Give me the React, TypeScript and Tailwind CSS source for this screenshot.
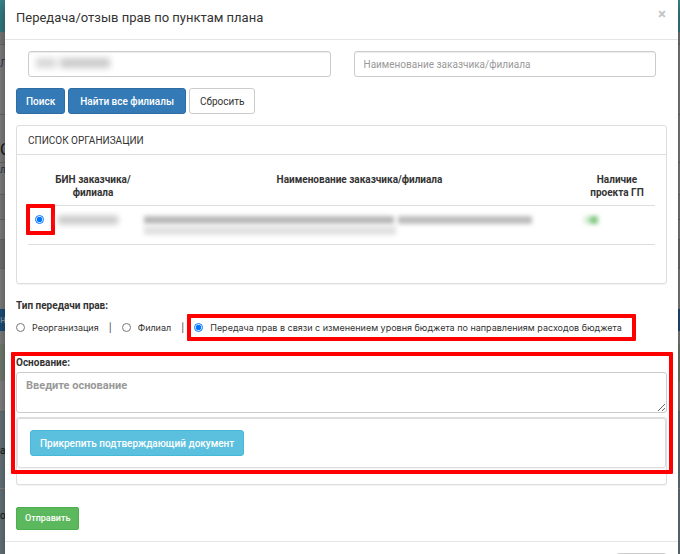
import { FC, ReactNode } from "react";

// Slices of the dimmed page that stay visible on both sides of the dialog
const pageBands = [
  { key: "navbar", className: "h-8 bg-[#37848b]", text: "" },
  { key: "crumbs", className: "h-[13px] border-b border-[#707070] bg-[#808080]", text: "" },
  { key: "toolbar", className: "h-[70px] border-b border-[#707070] bg-[#888888] pt-3 text-[#2b3a5c]", text: "Л" },
  { key: "heading", className: "h-[48px] border-b border-[#707070] bg-[#888888] pt-7 text-[16px] text-[#161616]", text: "О" },
  { key: "rowA", className: "h-[32px] border-b border-[#707070] bg-[#888888] text-[#2b3a5c]", text: "л" },
  { key: "rowB", className: "h-[25px] border-b border-[#707070] bg-[#838383]", text: "" },
  { key: "rowC", className: "h-[20px] border-b border-[#707070] bg-[#888888]", text: "" },
  { key: "rowD", className: "h-[29px] border-b border-[#707070] bg-[#787878]", text: "" },
  { key: "rowE", className: "h-10 bg-[#888888]", text: "" },
  { key: "button", className: "h-[22px] bg-[#1f5483] pt-1 text-[#9aa5b0]", text: "н" },
  { key: "gap", className: "h-[13px] bg-[#888888]", text: "" },
  { key: "success", className: "h-[37px] bg-[#7b8477]", text: "" },
  { key: "field", className: "h-[31px] border-b border-[#707070] bg-[#8b8b8b]", text: "" },
  { key: "info", className: "h-[77px] border-b border-[#928f88] bg-[#6c7c84] pt-8 text-[#161616]", text: "а" },
  { key: "footer", className: "grow bg-[#6c7c84] pt-5 text-[#161616]", text: "о" },
];

interface HighlightProps {
  className: string;
}

const Highlight: FC<HighlightProps> = ({ className }) => (
  <span
    aria-hidden="true"
    className={`pointer-events-none absolute rounded-[1px] border-4 border-[#fe0000] ${className}`}
  />
);

interface TransferTypeProps {
  id: string;
  defaultChecked?: boolean;
  children: ReactNode;
}

const TransferType: FC<TransferTypeProps> = ({ id, defaultChecked, children }) => (
  <span className="flex items-center gap-[7px]">
    <input
      type="radio"
      id={id}
      name="transferType"
      defaultChecked={defaultChecked}
      className="size-[9px] shrink-0 accent-[#0075ff]"
    />
    <label htmlFor={id}>{children}</label>
  </span>
);

const App: FC = () => {
  return (
    <div className="relative h-screen overflow-hidden bg-[#757575] pr-[2px] pl-[5px] font-['Roboto','Liberation_Sans',sans-serif] text-[10px] leading-[13px] text-[#333333]">
      <div aria-hidden="true" className="absolute inset-0 flex flex-col">
        {pageBands.map((band) => (
          <div key={band.key} className={`shrink-0 overflow-hidden ${band.className}`}>
            {band.text}
          </div>
        ))}
      </div>

      <div
        role="dialog"
        aria-labelledby="dialog-title"
        className="relative min-h-full bg-white shadow-[0_5px_15px_rgba(0,0,0,0.5)]"
      >
        <header className="flex h-10 items-center justify-between border-b border-[#e5e5e5] pr-3 pb-1 pl-[11px]">
          <h4 id="dialog-title" className="text-[13px] leading-4">
            Передача/отзыв прав по пунктам плана
          </h4>
          <button type="button" aria-label="Закрыть" className="pb-2 text-[15px] leading-4 font-bold text-[#c4c4c4]">
            ×
          </button>
        </header>

        <div className="px-[11px] pt-[11px]">
          <div className="grid grid-cols-2 gap-[23px] pr-[11px] pl-3">
            <div className="relative">
              <input
                type="text"
                aria-label="БИН заказчика/филиала"
                className="block h-[26px] w-full rounded-[3px] border border-[#cccccc] px-[9px] shadow-[inset_0_1px_1px_rgba(0,0,0,0.075)]"
              />
              <div className="absolute top-[7px] left-2 flex gap-1 blur-[3px]">
                <span className="h-2.5 w-5 bg-[#d8d8d8]" />
                <span className="h-2.5 w-[50px] bg-[#cbcbcb]" />
              </div>
            </div>
            <input
              type="text"
              aria-label="Наименование заказчика/филиала"
              placeholder="Наименование заказчика/филиала"
              className="block h-[26px] w-full rounded-[3px] border border-[#cccccc] px-[9px] shadow-[inset_0_1px_1px_rgba(0,0,0,0.075)] placeholder:text-[#999999]"
            />
          </div>

          <div className="mt-[11px] flex gap-[3px]">
            <button type="button" className="h-[26px] rounded-[3px] border border-[#2e6da4] bg-[#337ab7] px-[9px] font-medium text-white">
              Поиск
            </button>
            <button type="button" className="h-[26px] rounded-[3px] border border-[#2e6da4] bg-[#337ab7] px-[11px] font-medium text-white">
              Найти все филиалы
            </button>
            <button type="button" className="h-[26px] rounded-[3px] border border-[#cccccc] bg-white px-2.5">
              Сбросить
            </button>
          </div>

          <section className="mt-[11px] h-[159px] rounded-[3px] border border-[#dddddd] shadow-[0_1px_1px_rgba(0,0,0,0.05)]">
            <h5 className="flex h-[29px] items-center border-b border-[#dddddd] px-[11px]">СПИСОК ОРГАНИЗАЦИИ</h5>
            <div className="px-[11px] pt-[18px]">
              <table className="w-full table-fixed border-collapse">
                <colgroup>
                  <col className="w-[18px]" />
                  <col className="w-[94px]" />
                  <col />
                  <col className="w-[76px]" />
                </colgroup>
                <thead>
                  <tr className="h-8 border-b border-[#dddddd] align-top font-bold">
                    <td />
                    <th className="px-1">БИН заказчика/ филиала</th>
                    <th>Наименование заказчика/филиала</th>
                    <th className="px-2">Наличие проекта ГП</th>
                  </tr>
                </thead>
                <tbody>
                  <tr className="h-[39px] border-b border-[#dddddd] align-top">
                    <td className="relative pt-[9px] pl-[7px]">
                      <input
                        type="radio"
                        name="organization"
                        aria-label="Выбрать организацию"
                        defaultChecked
                        className="block size-[9px] accent-[#0075ff]"
                      />
                      <Highlight className="-top-0.5 -left-0.5 h-[31px] w-[29px]" />
                    </td>
                    <td className="pt-2.5 pl-3">
                      <div className="h-2 w-[60px] bg-[#c4c4c4] blur-[3px]" />
                    </td>
                    <td className="pt-2.5 pl-1">
                      <div className="flex items-start gap-1 blur-[2px]">
                        <div className="h-2 w-[250px] bg-[#b8b8b8]" />
                        <div className="h-2 w-[134px] bg-[#bdbdbd]" />
                      </div>
                      <div className="mt-0.5 h-[9px] w-[252px] bg-[#e2e2e2] blur-[2px]" />
                    </td>
                    <td className="pt-2.5 pl-[5px]">
                      <div className="flex blur-[2px]">
                        <div className="h-2 w-1.5 bg-[#d5ecd5]" />
                        <div className="h-2 w-2 bg-[#84c784]" />
                      </div>
                    </td>
                  </tr>
                </tbody>
              </table>
            </div>
          </section>

          <p className="mt-[15px] font-bold">Тип передачи прав:</p>
          <div className="mt-[9px] flex items-center gap-2.5 font-['Inter','Liberation_Sans',sans-serif] text-[9px]">
            <TransferType id="reorganization">Реорганизация</TransferType>
            <span>|</span>
            <TransferType id="branch">Филиал</TransferType>
            <span>|</span>
            <div className="relative">
              <TransferType id="budget" defaultChecked>
                Передача прав в связи с изменением уровня бюджета по направлениям расходов бюджета
              </TransferType>
              <Highlight className="-inset-y-[7px] -right-3.5 -left-[7px]" />
            </div>
          </div>

          <div className="mt-[22px]">
            <div className="relative">
              <label htmlFor="reason" className="block pb-[3px] font-bold">
                Основание:
              </label>
              <textarea
                id="reason"
                placeholder="Введите основание"
                className="block h-[41px] w-full resize-y rounded-[3px] border border-[#cccccc] px-[9px] py-[5px] text-[11px] leading-[15px] placeholder:font-bold placeholder:text-[#999999]"
              />
              <div className="mt-1 rounded-t-[3px] border border-b-0 border-[#dddddd]">
                <div className="rounded-[3px] border border-[#dddddd] px-3 py-[11px] shadow-[0_1px_1px_rgba(0,0,0,0.05)]">
                  <button type="button" className="h-[26px] rounded-[3px] border border-[#46b8da] bg-[#5bc0de] px-[9px] font-medium text-white">
                    Прикрепить подтверждающий документ
                  </button>
                </div>
              </div>
              <Highlight className="-top-1 -right-1.5 -bottom-1.5 -left-[5px]" />
            </div>
            <div className="h-[17px] rounded-b-[3px] border border-t-0 border-[#dddddd] shadow-[0_1px_1px_rgba(0,0,0,0.05)]" />
          </div>

          <button type="submit" className="mt-[22px] block h-[23px] rounded-[2px] border border-[#4cae4c] bg-[#5cb85c] px-2 text-[9px] font-medium text-white">
            Отправить
          </button>
        </div>

        <footer className="mt-[11px] flex justify-end border-t border-[#e5e5e5] px-[11px] pt-[11px]">
          <button
            type="button"
            aria-label="Закрыть"
            className="h-[26px] w-[51px] rounded-[3px] border border-[#cccccc] bg-white"
          />
        </footer>
      </div>
    </div>
  );
};

export default App;
